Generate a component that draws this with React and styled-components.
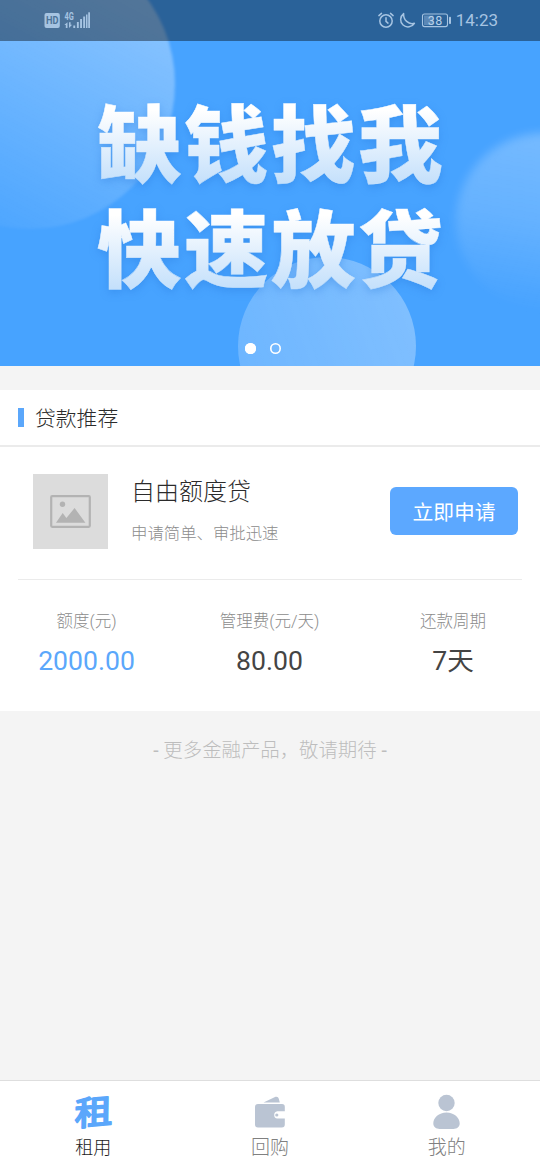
import React from 'react'
import styled, {createGlobalStyle} from 'styled-components'

const BLUE = '#5ba7fb'
const GREY = '#8c8c8c'
const LINE = '#ebebeb'
const ICON_GREY = '#bac4d3'

const GlobalStyle = createGlobalStyle`
  * {
    box-sizing: border-box;
  }

  body {
    margin: 0;
    background: #f4f4f4;
    font-family: Roboto, "Noto Sans CJK SC", sans-serif;
    font-weight: 300;
    color: #2b2b2b;
  }
`

const Page = styled.div`
  width: 540px;
  height: 1170px;
  display: flex;
  flex-direction: column;
  overflow: hidden;
`

const Banner = styled.header`
  position: relative;
  height: 366px;
  flex: none;
  display: flex;
  flex-direction: column;
  align-items: center;
  background: #47a3ff;
  overflow: hidden;
`

const Bubble = styled.div`
  position: absolute;
  left: ${p => p.$x - p.$r}px;
  top: ${p => p.$y - p.$r}px;
  width: ${p => p.$r * 2}px;
  height: ${p => p.$r * 2}px;
  border-radius: 50%;
  background: ${p => p.$fill};
  filter: blur(${p => p.$blur}px);
`

const StatusBar = styled.div`
  position: relative;
  width: 100%;
  height: 41px;
  flex: none;
  padding: 0 42px 0 44px;
  display: flex;
  align-items: center;
  justify-content: space-between;
  background: rgba(0, 0, 0, 0.4);
  color: #a6c4e2;
`

const StatusGroup = styled.div`
  display: flex;
  align-items: center;
  gap: 4px;
  padding-bottom: 1px;
`

const Clock = styled.span`
  font-size: 17px;
  line-height: 20px;
  font-weight: 400;
`

const Slogan = styled.div`
  position: relative;
  margin-top: 46px;
  filter: drop-shadow(0 3px 4px rgba(30, 110, 210, 0.3));
`

const SloganLine = styled.div`
  height: 105px;
  padding-left: 2px;
  font-family: "Noto Sans CJK SC", sans-serif;
  font-size: 84.5px;
  letter-spacing: 2.5px;
  line-height: 105px;
  font-weight: 900;
  white-space: nowrap;
  color: transparent;
  -webkit-text-stroke: 0.5px transparent;
  background: linear-gradient(#fff 22%, #c4e0fb 92%);
  background-clip: text;
  -webkit-background-clip: text;
`

const Dots = styled.div`
  position: relative;
  margin: auto 15px 12px 0;
  display: flex;
  gap: 14px;
`

const Dot = styled.i`
  width: 11px;
  height: 11px;
  border-radius: 50%;
  box-shadow: inset 0 0 0 1.6px #fff;
  background: ${p => p.$active ? '#fff' : 'transparent'};
`

const Card = styled.section`
  margin-top: 24px;
  height: 321px;
  flex: none;
  background: #fff;
`

const CardTitle = styled.h2`
  margin: 0;
  height: 57px;
  padding: 0 18px 1px;
  display: flex;
  align-items: center;
  gap: 11px;
  border-bottom: 2px solid ${LINE};
  font-size: 20.8px;
  font-weight: 300;

  &::before {
    content: "";
    width: 6px;
    height: 19px;
    background: ${BLUE};
  }
`

const Product = styled.div`
  margin: 0 18px;
  height: 133px;
  padding: 27px 4px 0 15px;
  display: flex;
  align-items: flex-start;
  border-bottom: 1px solid ${LINE};
`

const Thumb = styled.div`
  width: 75px;
  height: 75px;
  display: flex;
  align-items: center;
  justify-content: center;
  background: #dcdcdc;
`

const ProductText = styled.div`
  flex: 1;
  padding: 1px 0 0 23px;
`

const ProductName = styled.div`
  font-size: 24px;
  line-height: 34px;
`

const ProductDesc = styled.div`
  margin-top: 13px;
  font-size: 16.4px;
  line-height: 24px;
  color: ${GREY};
`

const ApplyButton = styled.button`
  width: 128px;
  height: 48px;
  margin: 13px 0 0;
  padding: 0;
  border: 0;
  border-radius: 6px;
  background: #5ca8ff;
  color: #fff;
  font-family: inherit;
  font-size: 20.8px;
  font-weight: 400;
`

const Stats = styled.div`
  display: flex;
  padding-top: 30px;
`

const Stat = styled.div`
  position: relative;
  width: ${p => p.$width}px;
  text-align: center;

  & + &::before {
    content: "";
    position: absolute;
    left: 0;
    top: 11px;
    width: 1px;
    height: 45px;
    background: ${LINE};
  }
`

const StatLabel = styled.div`
  font-size: 16.5px;
  line-height: 24px;
  color: ${GREY};
`

const StatValue = styled.div`
  margin-top: 8px;
  font-size: 26.6px;
  line-height: 38px;
  font-weight: 400;
  color: ${p => p.$blue ? BLUE : '#444'};
`

const More = styled.p`
  margin: 26px 0 0;
  text-align: center;
  font-size: 19.4px;
  line-height: 28px;
  color: #bdbdbd;
`

const Dash = styled.span`
  font-weight: 400;
`

const TabBar = styled.nav`
  margin-top: auto;
  height: 90px;
  flex: none;
  display: flex;
  justify-content: space-between;
  padding: 0 5px;
  background: #fff;
  border-top: 1px solid #dedede;
`

const Tab = styled.div`
  width: 176.5px;
  display: flex;
  flex-direction: column;
  align-items: center;
  padding-top: 10px;
  font-size: ${p => p.$active ? 18 : 19}px;
  line-height: 28px;
  color: ${p => p.$active ? '#222' : '#808080'};
`

const TabIcon = styled.div`
  height: 43px;
  padding-bottom: 1px;
  display: flex;
  align-items: center;
  justify-content: center;
`

const SignalIcon = () => (
    <svg width="48" height="20" viewBox="44 10 48 20" fill="currentColor">
        <rect x="44.5" y="13" width="15.3" height="15" rx="2"/>
        <text x="52.2" y="24.2" fontSize="10.5" fontWeight="700" textAnchor="middle" textLength="12.5" lengthAdjust="spacingAndGlyphs" fill="#4d7499">HD</text>
        <text x="64.5" y="20" fontSize="10" fontWeight="700" textLength="9.3" lengthAdjust="spacingAndGlyphs">4G</text>
        <path d="M67.5 28h-1.7v-3h-1.5l3.2-2.8zM69 22.3h1.6v2.4h1.6L69 28z"/>
        <rect x="73.3" y="25.5" width="1.9" height="2.5"/>
        <rect x="76.9" y="22" width="1.9" height="6"/>
        <rect x="80.1" y="19" width="1.9" height="9"/>
        <rect x="83.2" y="16.5" width="1.9" height="11.5"/>
        <rect x="86" y="14.5" width="1.5" height="13.5"/>
        <rect x="88.2" y="12.3" width="1.8" height="15.7"/>
    </svg>
)

const AlarmIcon = () => (
    <svg width="18" height="18" viewBox="0 0 18 18" fill="none" stroke="currentColor" strokeWidth="1.5" strokeLinecap="round">
        <circle cx="9" cy="10" r="6.2"/>
        <path d="M9 6.7v3.6l2 1.8M1.9 4.6l2.6-2.2M16.1 4.6l-2.6-2.2"/>
    </svg>
)

const MoonIcon = () => (
    <svg width="18" height="18" viewBox="0 0 18 18" fill="none" stroke="currentColor" strokeWidth="1.5" strokeLinejoin="round">
        <path d="M4.600 2.600A7.400 7.400 0 1 0 15.400 12.300C9.500 14 4.200 8.800 4.600 2.600z"/>
    </svg>
)

const BatteryIcon = () => (
    <svg width="31" height="18" viewBox="0 0 31 18" fill="none">
        <rect x="1.5" y="3" width="25" height="12.6" rx="2" stroke="currentColor" strokeWidth="1.1"/>
        <rect x="3" y="4.5" width="9.3" height="9.6" fill="currentColor" opacity="0.4"/>
        <rect x="28" y="5.7" width="2" height="7.3" rx="0.8" fill="currentColor"/>
        <text x="14" y="13.8" textAnchor="middle" fontSize="12.5" fontWeight="400" fill="#b9d1e9" textLength="14.5">38</text>
    </svg>
)

const PictureIcon = () => (
    <svg width="41" height="33" viewBox="0 0 41 33">
        <rect x="1.2" y="1.2" width="38.6" height="30.6" rx="1" fill="none" stroke="#b3b3b3" strokeWidth="2.2"/>
        <circle cx="12.5" cy="9.3" r="2.7" fill="#b3b3b3"/>
        <path d="M6 27.7l6.7-9.7 3.7 5 8.2-10 10.8 14.7z" fill="#b3b3b3"/>
    </svg>
)

const RentIcon = () => (
    <svg width="60" height="60" viewBox="-8 -9 60 60" style={{flex: 'none'}}>
        <text
            x="22.500"
            y="34"
            textAnchor="middle"
            fontFamily="Noto Sans CJK SC, sans-serif"
            fontSize="35"
            fontWeight="400"
            fill={BLUE}
            stroke={BLUE}
            strokeWidth="2"
            strokeLinejoin="round"
            transform="translate(22 21) rotate(-5) skewX(-6) scale(1.08 .95) translate(-22 -21)"
        >租</text>
    </svg>
)

const WalletIcon = () => (
    <svg width="32" height="32" viewBox="0 0 32 32" fill={ICON_GREY}>
        <path d="M9.5 6.500L20.500 1.200c2.300-1 3.700-.4 4.300 1.500l1 3.800z"/>
        <path d="M4 8h24a2.800 2.800 0 0 1 2.800 2.800v4.500h-7.500a3.700 3.700 0 0 0 0 7.300h7.500v6a3 3 0 0 1-3 3H4a3 3 0 0 1-3-3V11a3 3 0 0 1 3-3z"/>
        <circle cx="22.8" cy="19" r="1.6"/>
    </svg>
)

const PersonIcon = () => (
    <svg width="28" height="36" viewBox="0.5 0 28 36" fill={ICON_GREY}>
        <circle cx="14" cy="9" r="8.2"/>
        <path d="M14 18.500c7.600 0 13.200 5.200 13.200 10.800 0 4-3 5.700-6.200 5.700H7c-3.200 0-6.200-1.700-6.200-5.700C.8 23.700 6.400 18.500 14 18.500z"/>
    </svg>
)

const App = () => {

    return (
        <Page>
            <GlobalStyle/>

            <Banner>
                <Bubble $x={30} $y={84} $r={145} $blur={1.5} $fill="linear-gradient(208deg, rgba(255,255,255,0.36) 18%, rgba(255,255,255,0.2) 52%, rgba(255,255,255,0.03) 88%)"/>
                <Bubble $x={544} $y={221} $r={88} $blur={5} $fill="linear-gradient(190deg, rgba(255,255,255,0.27), rgba(255,255,255,0.17) 50%, rgba(255,255,255,0) 95%)"/>
                <Bubble $x={327} $y={346} $r={89} $blur={0.5} $fill="linear-gradient(250deg, rgba(255,255,255,0.32), rgba(255,255,255,0.2))"/>
                <StatusBar>
                    <StatusGroup>
                        <SignalIcon/>
                    </StatusGroup>
                    <StatusGroup>
                        <AlarmIcon/>
                        <MoonIcon/>
                        <BatteryIcon/>
                        <Clock>14:23</Clock>
                    </StatusGroup>
                </StatusBar>
                <Slogan>
                    <SloganLine>缺钱找我</SloganLine>
                    <SloganLine>快速放贷</SloganLine>
                </Slogan>
                <Dots>
                    <Dot $active/>
                    <Dot/>
                </Dots>
            </Banner>

            <Card>
                <CardTitle>贷款推荐</CardTitle>
                <Product>
                    <Thumb>
                        <PictureIcon/>
                    </Thumb>
                    <ProductText>
                        <ProductName>自由额度贷</ProductName>
                        <ProductDesc>申请简单、审批迅速</ProductDesc>
                    </ProductText>
                    <ApplyButton>立即申请</ApplyButton>
                </Product>
                <Stats>
                    <Stat $width={173}>
                        <StatLabel>额度(元)</StatLabel>
                        <StatValue $blue>2000.00</StatValue>
                    </Stat>
                    <Stat $width={193}>
                        <StatLabel>管理费(元/天)</StatLabel>
                        <StatValue>80.00</StatValue>
                    </Stat>
                    <Stat $width={174}>
                        <StatLabel>还款周期</StatLabel>
                        <StatValue>7天</StatValue>
                    </Stat>
                </Stats>
            </Card>

            <More><Dash>-</Dash> 更多金融产品，敬请期待 <Dash>-</Dash></More>

            <TabBar>
                <Tab $active>
                    <TabIcon>
                        <RentIcon/>
                    </TabIcon>
                    租用
                </Tab>
                <Tab>
                    <TabIcon>
                        <WalletIcon/>
                    </TabIcon>
                    回购
                </Tab>
                <Tab>
                    <TabIcon>
                        <PersonIcon/>
                    </TabIcon>
                    我的
                </Tab>
            </TabBar>
        </Page>
    )
}

export default App
